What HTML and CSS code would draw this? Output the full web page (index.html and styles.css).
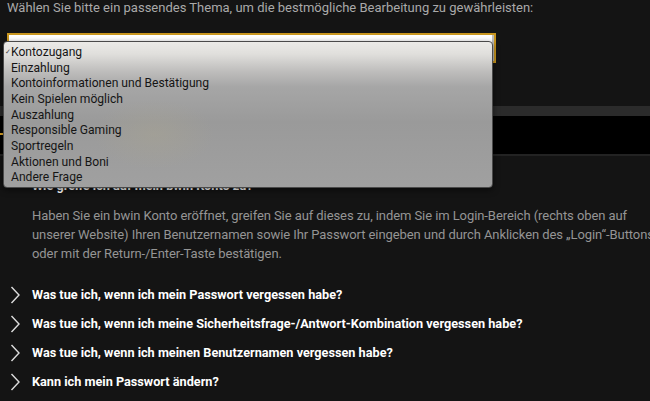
FILE: index.html
```html
<!DOCTYPE html>
<html lang="de">
<head>
  <meta charset="UTF-8">
  <meta name="viewport" content="width=device-width, initial-scale=1.0">
  <title>Hilfe - Kontozugang</title>
  <link rel="stylesheet" href="styles.css">
</head>
<body>
  <div class="page">
    <p class="intro">Wählen Sie bitte ein passendes Thema, um die bestmögliche Bearbeitung zu gewährleisten:</p>

    <div class="select-wrap">
      <div class="select"></div>

      <ul class="menu">
        <li class="selected"><span class="check">&#10003;</span>Kontozugang</li>
        <li>Einzahlung</li>
        <li>Kontoinformationen und Bestätigung</li>
        <li>Kein Spielen möglich</li>
        <li>Auszahlung</li>
        <li>Responsible Gaming</li>
        <li>Sportregeln</li>
        <li>Aktionen und Boni</li>
        <li>Andere Frage</li>
      </ul>
    </div>

    <div class="tabs">
      <div class="tabs-top"></div>
      <div class="tabs-bar">
        <span class="tab-active"></span>
      </div>
    </div>

    <ul class="faq">
      <li class="faq-item open">
        <div class="question">
          <svg class="chevron" width="10" height="18" viewBox="0 0 10 18"><path d="M1 6 L5 10 L9 6" fill="none" stroke="#ddd" stroke-width="1.4"/></svg>
          <span>Wie greife ich auf mein bwin Konto zu?</span>
        </div>
        <p class="answer">Haben Sie ein bwin Konto eröffnet, greifen Sie auf dieses zu, indem Sie im Login-Bereich (rechts oben auf unserer Website) Ihren Benutzernamen sowie Ihr Passwort eingeben und durch Anklicken des „Login“-Buttons oder mit der Return-/Enter-Taste bestätigen.</p>
      </li>
      <li class="faq-item">
        <div class="question">
          <svg class="chevron" width="10" height="18" viewBox="0 0 10 18"><path d="M1.5 1 L9 9 L1.5 17" fill="none" stroke="#ddd" stroke-width="1.4"/></svg>
          <span>Was tue ich, wenn ich mein Passwort vergessen habe?</span>
        </div>
      </li>
      <li class="faq-item">
        <div class="question">
          <svg class="chevron" width="10" height="18" viewBox="0 0 10 18"><path d="M1.5 1 L9 9 L1.5 17" fill="none" stroke="#ddd" stroke-width="1.4"/></svg>
          <span>Was tue ich, wenn ich meine Sicherheitsfrage-/Antwort-Kombination vergessen habe?</span>
        </div>
      </li>
      <li class="faq-item">
        <div class="question">
          <svg class="chevron" width="10" height="18" viewBox="0 0 10 18"><path d="M1.5 1 L9 9 L1.5 17" fill="none" stroke="#ddd" stroke-width="1.4"/></svg>
          <span>Was tue ich, wenn ich meinen Benutzernamen vergessen habe?</span>
        </div>
      </li>
      <li class="faq-item">
        <div class="question">
          <svg class="chevron" width="10" height="18" viewBox="0 0 10 18"><path d="M1.5 1 L9 9 L1.5 17" fill="none" stroke="#ddd" stroke-width="1.4"/></svg>
          <span>Kann ich mein Passwort ändern?</span>
        </div>
      </li>
    </ul>
  </div>
</body>
</html>
```

FILE: styles.css
```css
html, body {
  margin: 0;
  padding: 0;
  background-color: #141414;
  overflow: hidden;
}
body {
  font-family: Roboto, "Noto Sans", sans-serif;
  font-size: 13px;
  color: #aaa;
}
.page {
  width: 650px;
  height: 401px;
}
.intro {
  margin: 0 0 18px 7px;
  line-height: 15px;
  color: #a9a9a9;
  white-space: nowrap;
}
.select-wrap {
  position: relative;
  margin-left: 7px;
  width: 489px;
}
.select {
  height: 26px;
  border: 2px solid #c8961f;
  background-color: #fff;
  box-shadow: inset -2px -2px 0 #bdbdbd;
}
.menu {
  position: absolute;
  top: 8px;
  left: -4px;
  width: 488px;
  height: 142px;
  margin: 0;
  padding: 3px 0 0;
  list-style: none;
  border: 1px solid #4a4a4a;
  border-radius: 4px;
  background:
    radial-gradient(ellipse 60px 35px at 150px 92px, rgba(175, 168, 140, 0.3), transparent),
    linear-gradient(to bottom, #ebeae7 0px, #e0dfdc 12px, #bdbcbb 30px, #a6a6a6 45px, #9a9a9a 80px, #a0a0a0 143px);
  box-shadow: 0 2px 6px rgba(0, 0, 0, 0.5);
  font-family: Roboto, "Liberation Sans", sans-serif;
  font-size: 12.1px;
  color: #151515;
  z-index: 10;
}
.menu li {
  position: relative;
  height: 15.67px;
  line-height: 15.67px;
  padding-left: 7px;
  white-space: nowrap;
}
.check {
  position: absolute;
  left: 1px;
  top: 0;
  font-size: 7px;
  color: #444;
}
.tabs {
  margin-top: 43px;
}
.tabs-top {
  height: 10px;
  background-color: #2b2b2b;
}
.tabs-bar {
  position: relative;
  height: 38px;
  background-color: #000;
  border-bottom: 2px solid #232323;
}
.tab-active {
  position: absolute;
  left: 0;
  top: 17px;
  width: 180px;
  height: 2px;
  background-color: #e2a92a;
}
.faq {
  margin: 15px 0 0;
  padding: 0;
  list-style: none;
}
.question {
  display: flex;
  align-items: center;
  height: 29px;
  font-size: 12.7px;
  font-weight: 700;
  color: #fff;
  white-space: nowrap;
}
.chevron {
  width: 10px;
  margin: 0 12px 0 10px;
  flex-shrink: 0;
}
.answer {
  margin: 6px 0 17px 32px;
  width: 640px;
  line-height: 19px;
  letter-spacing: -0.08px;
  color: #959595;
}
```
